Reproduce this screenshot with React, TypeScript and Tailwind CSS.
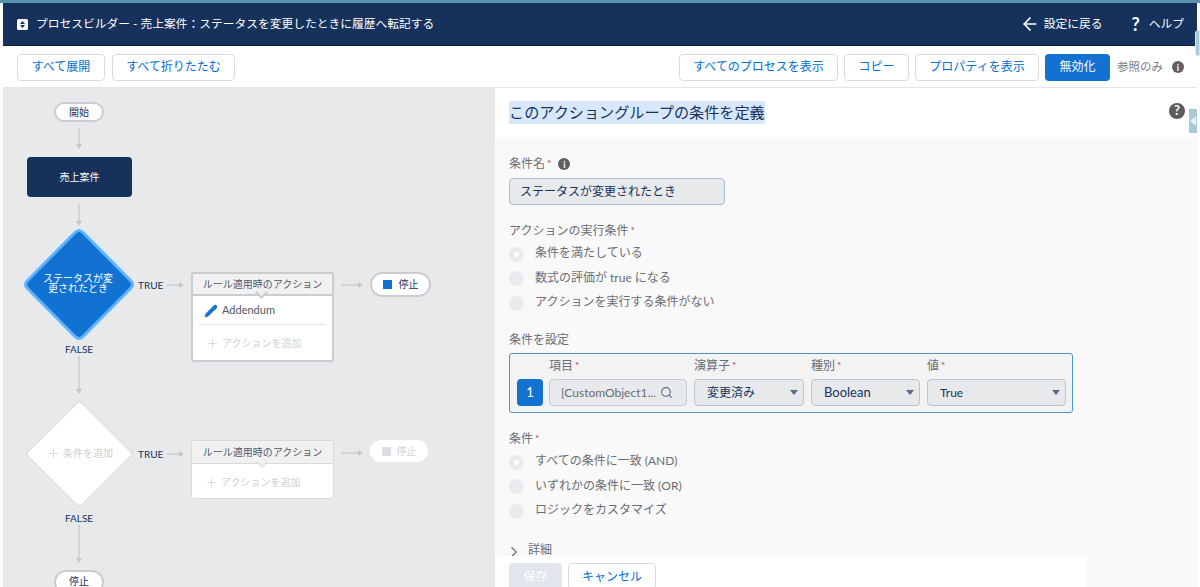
import { ArrowLeft, ChevronRight, Pencil, Plus, Search } from "lucide-react"

const btnClass = "h-[27px] flex items-center justify-center bg-white border border-[#dddbda] rounded text-[#0070d2] text-xs"
const selectClass = "h-[27px] flex items-center justify-between bg-[#e8e9eb] border border-[#b9c4d4] rounded pl-[12px] pr-[5px] text-xs text-[#16325c]"
const labelClass = "h-[18px] flex items-center text-xs text-[#6a6d73]"

function Req() {
  return <span className="text-[#c23934] text-[10px] ml-[2px]">*</span>
}

function InfoDot() {
  return (
    <span className="w-3 h-3 rounded-full bg-[#5f6065] text-white text-[9px] font-bold leading-none flex items-center justify-center">
      i
    </span>
  )
}

function Radio({ label, checked }: { label: string; checked?: boolean }) {
  return (
    <div className="h-[24.5px] flex items-center text-xs text-[#6a6d73]">
      <span className="w-[15px] h-[15px] translate-y-[1px] rounded-full bg-[#e9ebee] flex items-center justify-center">
        {checked && <span className="w-[5px] h-[5px] rounded-full bg-white" />}
      </span>
      <span className="ml-[11px]">{label}</span>
    </div>
  )
}

function Caret() {
  return <span className="w-0 h-0 border-x-[4px] border-x-transparent border-t-[5px] border-t-[#54698d]" />
}

function VArrow({ left, top, height }: { left: number; top: number; height: number }) {
  return (
    <svg className="absolute" style={{ left, top }} width="8" height={height} viewBox={`0 0 8 ${height}`}>
      <path d={`M4 0V${height - 3}`} stroke="#c4c6ca" strokeWidth="1.2" />
      <path d={`M1 ${height - 5}H7L4 ${height}Z`} fill="#c4c6ca" />
    </svg>
  )
}

function HArrow({ left, top, width }: { left: number; top: number; width: number }) {
  return (
    <svg className="absolute" style={{ left, top }} width={width} height="8" viewBox={`0 0 ${width} 8`}>
      <path d={`M0 4H${width - 3}`} stroke="#c4c6ca" strokeWidth="1.2" />
      <path d={`M${width - 5} 1V7L${width} 4Z`} fill="#c4c6ca" />
    </svg>
  )
}

function Canvas() {
  return (
    <div className="relative w-[492px] shrink-0 bg-[#e8e9eb] overflow-hidden">
      <div className="absolute left-[51px] top-[14px] w-[50px] h-[20px] bg-white border-2 border-[#c9ccd1] rounded-full flex items-center justify-center text-[10px] text-[#16325c]">
        開始
      </div>
      <VArrow left={72} top={40} height={21} />
      <div className="absolute left-[24px] top-[69px] w-[105px] h-[40px] bg-[#16325c] rounded flex items-center justify-center text-[10px] text-white">
        売上案件
      </div>
      <VArrow left={72} top={116} height={22} />

      <svg className="absolute left-[19px] top-[139px]" width="114" height="115" viewBox="0 0 114 115">
        <path
          d="M53 5.5 Q57 1.5 61 5.5 L108.5 53.5 Q112.5 57.5 108.5 61.5 L61 109.5 Q57 113.5 53 109.5 L5.5 61.5 Q1.5 57.5 5.5 53.5 Z"
          fill="#1172d2"
          stroke="#5eb4ff"
          strokeWidth="3"
        />
      </svg>
      <div className="absolute left-[39px] top-[184.5px] w-[72px] text-center text-[10px] leading-[10.5px] text-white">
        ステータスが変更されたとき
      </div>
      <div className="absolute left-[135px] top-[191px] text-[10px] leading-[13px] text-[#16325c]">TRUE</div>
      <HArrow left={164} top={193} width={17} />
      <div className="absolute left-[60px] top-[255px] w-[32px] text-center text-[10px] leading-[13px] text-[#16325c]">FALSE</div>
      <VArrow left={72} top={268} height={38} />

      <div className="absolute left-[188px] top-[184px] w-[143px] h-[90px] bg-white border-2 border-[#c9ccd1] rounded-[3px] flex flex-col">
        <div className="relative h-[22px] shrink-0 bg-[#f1f1f2] border-b-2 border-[#c9ccd1] flex items-center justify-center text-[10px] text-[#54585f]">
          ルール適用時のアクション
          <span className="absolute left-[64px] top-[14px] w-[9px] h-[9px] rotate-45 bg-[#f1f1f2] border-r-2 border-b-2 border-[#c9ccd1]" />
        </div>
        <div className="mx-[6px] h-[29px] shrink-0 pt-[1px] flex items-center border-b border-[#e4e5e7] pl-[5px] text-[11px] text-[#54585f]">
          <Pencil className="w-[14px] h-[14px] mr-[4px] text-[#1172d2]" fill="#1172d2" strokeWidth={1.5} />
          Addendum
        </div>
        <div className="flex-1 pt-[2px] pl-[12.5px] flex items-center text-[10px] text-[#cfd1d4]">
          <Plus className="w-[13px] h-[13px] mr-[3.5px]" strokeWidth={1.5} />
          アクションを追加
        </div>
      </div>
      <HArrow left={338} top={193} width={22} />
      <div className="absolute left-[367px] top-[184px] w-[61px] h-[25px] bg-white border-2 border-[#c9ccd1] rounded-full flex items-center justify-center text-[10px] text-[#16325c]">
        <span className="w-[9px] h-[9px] bg-[#1172d2] mr-[7px]" />
        停止
      </div>

      <svg className="absolute left-[22px] top-[312px]" width="110" height="108" viewBox="0 0 110 108">
        <path
          d="M52.5 3 Q54.5 1 56.5 3 L106 52 Q108 54 106 56 L56.5 105 Q54.5 107 52.5 105 L3 56 Q1 54 3 52 Z"
          fill="#fff"
          stroke="#d4d6d9"
          strokeWidth="1"
        />
      </svg>
      <div className="absolute left-[43.5px] top-[359px] flex items-center text-[10px] leading-[13px] text-[#cfd1d4]">
        <Plus className="w-[13px] h-[13px] mr-[3.5px]" strokeWidth={1.5} />
        条件を追加
      </div>
      <div className="absolute left-[135px] top-[360px] text-[10px] leading-[13px] text-[#16325c]">TRUE</div>
      <HArrow left={164} top={362} width={17} />
      <div className="absolute left-[60px] top-[424px] w-[32px] text-center text-[10px] leading-[13px] text-[#16325c]">FALSE</div>
      <VArrow left={72} top={437} height={38} />

      <div className="absolute left-[188px] top-[352px] w-[143px] h-[59px] bg-white border border-[#d8dadd] rounded-[3px] flex flex-col">
        <div className="relative h-[23px] shrink-0 bg-[#f1f1f2] border-b border-[#d8dadd] flex items-center justify-center text-[10px] text-[#54585f]">
          ルール適用時のアクション
          <span className="absolute left-[66px] top-[17px] w-[8px] h-[8px] rotate-45 bg-[#f1f1f2] border-r border-b border-[#d8dadd]" />
        </div>
        <div className="flex-1 pt-[3px] pl-[12.5px] flex items-center text-[10px] text-[#cfd1d4]">
          <Plus className="w-[13px] h-[13px] mr-[3.5px]" strokeWidth={1.5} />
          アクションを追加
        </div>
      </div>
      <HArrow left={338} top={361} width={22} />
      <div className="absolute left-[367px] top-[352px] w-[58px] h-[22px] bg-white rounded-full flex items-center justify-center text-[10px] text-[#cfd1d4]">
        <span className="w-[9px] h-[9px] bg-[#dcdde0] mr-[6px]" />
        停止
      </div>
      <div className="absolute left-[51px] top-[482px] w-[50px] h-[24px] bg-white border-2 border-[#c9ccd1] rounded-full pt-[2px] text-center text-[10px] text-[#16325c]">
        停止
      </div>
    </div>
  )
}

export default function App() {
  return (
    <div className="w-[1200px] h-[587px] overflow-hidden bg-white pl-[3px] pr-[3px] pt-[3px] flex flex-col font-['Lato','Noto_Sans_CJK_JP',sans-serif] relative">
      <div className="absolute left-0 top-0 w-full h-[3px] bg-[#5a90b0]" />
      <header className="h-[43px] shrink-0 bg-[#16325c] border-b border-[#0a1a30] flex items-center text-white text-[11.75px] pl-[14px] pr-[13px]">
        <svg width="11" height="11" viewBox="0 0 11 11" className="mr-[8px]">
          <rect width="11" height="11" rx="1.5" fill="#fff" />
          <path d="M5.5 2 L8 5 H3 Z M5.5 9 L8 6 H3 Z" fill="#16325c" />
        </svg>
        <span>プロセスビルダー - 売上案件：ステータスを変更したときに履歴へ転記する</span>
        <ArrowLeft className="w-5 h-5 ml-auto mr-[4px]" strokeWidth={2} />
        <span>設定に戻る</span>
        <span className="ml-[29px] mr-[9px] text-[18px] font-bold leading-none">?</span>
        <span>ヘルプ</span>
      </header>

      <div className="h-[42px] shrink-0 pt-[1px] bg-white border-b border-[#e4e5e7] flex items-center pl-[14px] pr-[13px] gap-[6px]">
        <div className={`${btnClass} w-[88px]`}>すべて展開</div>
        <div className={`${btnClass} w-[123px] ml-[1px]`}>すべて折りたたむ</div>
        <div className={`${btnClass} w-[159px] ml-auto`}>すべてのプロセスを表示</div>
        <div className={`${btnClass} w-[65px]`}>コピー</div>
        <div className={`${btnClass} w-[124px]`}>プロパティを表示</div>
        <div className="h-[27px] w-[65px] rounded bg-[#1172d2] text-white text-xs flex items-center justify-center">無効化</div>
        <span className="ml-[1px] text-[11.5px] text-[#7a7c80]">参照のみ</span>
        <span className="ml-[3px]"><InfoDot /></span>
      </div>

      <div className="flex-1 flex min-h-0">
        <Canvas />
        <div className="w-[702px] shrink-0 flex flex-col relative">
          <div className="h-[49px] shrink-0 bg-white pl-[14px] flex items-center">
            <span className="bg-[#d7e8fb] text-[15.15px] leading-[23px] text-[#16325c]">このアクショングループの条件を定義</span>
            <span className="absolute left-[674px] top-[15px] w-[16px] h-[16px] rounded-full bg-[#5c5c5f] text-white text-[13px] font-bold flex items-center justify-center">?</span>
          </div>
          <div className="flex-1 bg-[#f9f9f9] pl-[14px] pt-[19px] min-h-0">
            <div className="flex items-center h-[16px] text-xs text-[#6a6d73]">
              条件名<Req />
              <span className="ml-[7px]"><InfoDot /></span>
            </div>
            <div className="mt-[6px] w-[216px] h-[27px] bg-[#e8e9eb] border border-[#a9bcd6] rounded pl-[10px] flex items-center text-xs text-[#16325c]">
              ステータスが変更されたとき
            </div>
            <div className="mt-[18px] mb-[2px] h-[16px] flex items-center text-xs text-[#6a6d73]">アクションの実行条件<Req /></div>
            <Radio label="条件を満たしている" checked />
            <Radio label="数式の評価が true になる" />
            <Radio label="アクションを実行する条件がない" />
            <div className="mt-[17.5px] h-[16px] flex items-center text-xs text-[#6a6d73]">条件を設定</div>
            <div className="mt-[5px] w-[564px] h-[60px] bg-[#f3f3f4] border border-[#4e95c9] rounded-[3px] pl-[7px] pt-[3px] flex items-start">
              <div className="w-[26px] h-[27px] mt-[22px] rounded bg-[#1172d2] text-white text-[13px] flex items-center justify-center">1</div>
              <div className="ml-[6px] w-[138px]">
                <div className={`${labelClass} mb-[4px]`}>項目<Req /></div>
                <div className="h-[27px] flex items-center justify-between bg-[#e8e9eb] border border-[#c3ccd8] rounded pl-[11px] pr-[13px] text-xs text-[#6a6d73]">
                  [CustomObject1...
                  <Search className="w-[13px] h-[13px] shrink-0 text-[#54698d]" />
                </div>
              </div>
              <div className="ml-[7px] w-[110px]">
                <div className={`${labelClass} mb-[4px]`}>演算子<Req /></div>
                <div className={selectClass}>変更済み<Caret /></div>
              </div>
              <div className="ml-[7px] w-[109px]">
                <div className={`${labelClass} mb-[4px]`}>種別<Req /></div>
                <div className={selectClass}><span className="text-[13px]">Boolean</span><Caret /></div>
              </div>
              <div className="ml-[7px] w-[139px]">
                <div className={`${labelClass} mb-[4px]`}>値<Req /></div>
                <div className={selectClass}>True<Caret /></div>
              </div>
            </div>
            <div className="mt-[18px] mb-[2px] h-[16px] flex items-center text-xs text-[#6a6d73]">条件<Req /></div>
            <Radio label="すべての条件に一致 (AND)" checked />
            <Radio label="いずれかの条件に一致 (OR)" />
            <Radio label="ロジックをカスタマイズ" />
            <div className="mt-[19px] h-[16px] flex items-center text-xs text-[#6a6d73]">
              <ChevronRight className="w-[18px] h-[18px] mr-[5px] -ml-[4px] translate-y-[2px]" strokeWidth={1.5} />
              詳細
            </div>
          </div>
          <div className="absolute left-0 top-[468px] w-[592px] h-[31px] bg-white pl-[14px] pt-[7px] flex gap-[6px]">
            <div className="w-[53px] h-[27px] rounded bg-[#e0e5ee] text-white text-xs flex items-center justify-center">保存</div>
            <div className="w-[88px] h-[27px] bg-white border border-[#dddbda] rounded text-[#0070d2] text-xs flex items-center justify-center">キャンセル</div>
          </div>
        </div>
      </div>

      <div className="absolute left-[1186px] top-[109px] w-[11px] h-[24px] bg-white rounded-l-[3px] flex items-center justify-end">
        <span className="w-[8px] h-[24px] bg-[#a9c8d8] flex items-center justify-center">
          <span className="w-0 h-0 border-y-[5px] border-y-transparent border-r-[6px] border-r-[#e8f0f4]" />
        </span>
      </div>
      <div className="absolute left-[1195px] top-[30px] w-[5px] h-[26px] bg-white border border-[#e4e5e7] rounded-l-[3px]">
        <div className="h-full bg-[#a9c8d8]" />
      </div>
    </div>
  )
}
